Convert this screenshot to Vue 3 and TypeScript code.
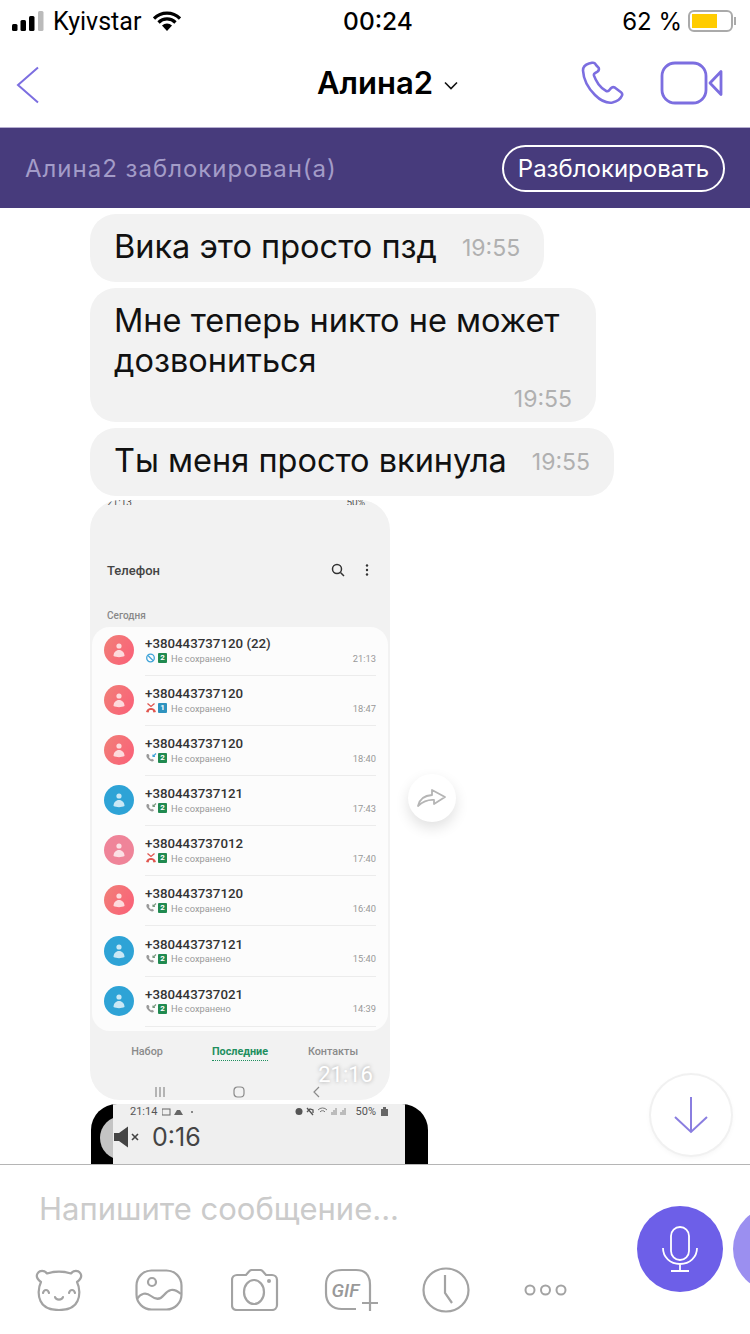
<script setup lang="ts">
type CallKind = 'blocked' | 'missed' | 'spam' | 'incoming'

interface CallRow {
  number: string
  kind: CallKind
  sim: number
  time: string
  tone: 'coral' | 'blue' | 'pink'
}

const calls: CallRow[] = [
  { number: '+380443737120 (22)', kind: 'blocked', sim: 2, time: '21:13', tone: 'coral' },
  { number: '+380443737120', kind: 'missed', sim: 1, time: '18:47', tone: 'coral' },
  { number: '+380443737120', kind: 'spam', sim: 2, time: '18:40', tone: 'coral' },
  { number: '+380443737121', kind: 'incoming', sim: 2, time: '17:43', tone: 'blue' },
  { number: '+380443737012', kind: 'missed', sim: 2, time: '17:40', tone: 'pink' },
  { number: '+380443737120', kind: 'incoming', sim: 2, time: '16:40', tone: 'coral' },
  { number: '+380443737121', kind: 'incoming', sim: 2, time: '15:40', tone: 'blue' },
  { number: '+380443737021', kind: 'incoming', sim: 2, time: '14:39', tone: 'blue' },
]
</script>

<template>
  <div class="page">
    <div class="status-bar">
      <div class="status-left">
        <svg class="signal" width="32" height="20" viewBox="0 0 32 20">
          <rect x="0" y="13" width="5.500" height="7" rx="1.500" fill="#000" />
          <rect x="8.500" y="9" width="5.500" height="11" rx="1.500" fill="#000" />
          <rect x="17" y="5" width="5.500" height="15" rx="1.500" fill="#000" />
          <rect x="26" y="0" width="5.500" height="20" rx="1.500" fill="#bbb" />
        </svg>
        <span class="carrier">Kyivstar</span>
        <svg class="wifi" width="28" height="20" viewBox="0 0 28 20">
          <path d="M1 7.500a18.500 18.500 0 0 1 26 0" fill="none" stroke="#000" stroke-width="3.200" />
          <path d="M5.500 11.500a12 12 0 0 1 17 0" fill="none" stroke="#000" stroke-width="3.200" />
          <path d="M14 20l-5-5.500a7.200 7.200 0 0 1 10 0z" fill="#000" />
        </svg>
      </div>
      <span class="clock">00:24</span>
      <div class="status-right">
        <span>62 %</span>
        <div class="battery"><div class="battery-fill"></div></div>
        <div class="battery-tip"></div>
      </div>
    </div>

    <div class="nav-bar">
      <svg class="back" width="24" height="38" viewBox="0 0 24 38">
        <path d="M22 1.500L2 19l20 17.500" fill="none" stroke="#7c6ee0" stroke-width="2" />
      </svg>
      <div class="title">
        <span>Алина2</span>
        <svg width="14" height="9" viewBox="0 0 14 9">
          <path d="M1 1.500l6 6 6-6" fill="none" stroke="#111" stroke-width="1.600" />
        </svg>
      </div>
      <svg class="phone" width="44" height="44" viewBox="0 0 44 44">
        <path
          d="M8 2.500c-3.500 1-6 3.500-6 7 .5 9 5.500 18 12 24.500 5 5 11.500 8.500 17.500 7.500 3.500-.8 8-3.500 9.500-7 .6-1.500 0-2.500-1-3.300l-6-4.500c-1.500-1-3-.7-4 .4l-2 2.400c-1 .9-2 1-3 .4-3-1.700-5.500-4-7.500-6.700-2-2.800-3.500-5.500-4.500-8.500-.3-1 0-2 1-2.600l2.500-1.500c1.300-.9 1.700-2.300 1.200-3.800L15 4c-.7-1.700-2.300-2.500-4-2.200z"
          fill="none"
          stroke="#7c6ee0"
          stroke-width="2.600"
          stroke-linejoin="round"
        />
      </svg>
      <svg class="video" width="64" height="44" viewBox="0 0 64 44">
        <rect x="2" y="2" width="44" height="40" rx="13" fill="none" stroke="#7c6ee0" stroke-width="2.800" />
        <path d="M61 10.500v23L50 22z" fill="none" stroke="#7c6ee0" stroke-width="2.800" stroke-linejoin="round" />
      </svg>
    </div>

    <div class="banner">
      <span class="banner-text">Алина2 заблокирован(а)</span>
      <div class="unblock">Разблокировать</div>
    </div>

    <div class="chat">
      <div class="bubble">
        <span>Вика это просто пзд</span>
        <span class="time">19:55</span>
      </div>
      <div class="bubble bubble-wide">
        <span class="wrap-text">Мне теперь никто не может дозвониться</span>
        <span class="time time-below">19:55</span>
      </div>
      <div class="bubble">
        <span>Ты меня просто вкинула</span>
        <span class="time">19:55</span>
      </div>

      <div class="image-row">
        <div class="shot">
          <div class="shot-status">
            <span>21:13</span>
            <span class="shot-status-fill"></span>
            <span>50%</span>
          </div>
          <div class="shot-head">
            <span class="shot-title">Телефон</span>
            <svg width="14" height="14" viewBox="0 0 14 14">
              <circle cx="6" cy="6" r="4.500" fill="none" stroke="#333" stroke-width="1.500" />
              <path d="M9.500 9.500L13 13" stroke="#333" stroke-width="1.500" />
            </svg>
            <svg width="4" height="14" viewBox="0 0 4 14">
              <circle cx="2" cy="2.500" r="1.200" fill="#333" />
              <circle cx="2" cy="7" r="1.200" fill="#333" />
              <circle cx="2" cy="11.500" r="1.200" fill="#333" />
            </svg>
          </div>
          <div class="shot-day">Сегодня</div>
          <div class="call-list">
            <div v-for="(c, i) in calls" :key="i" class="call-row">
              <div class="avatar" :class="c.tone">
                <svg width="14" height="16" viewBox="0 0 14 16">
                  <circle cx="7" cy="4" r="2.600" fill="#fff" fill-opacity="0.75" />
                  <path d="M1.500 14c0-3.500 2.500-6 5.500-6s5.500 2.500 5.500 6c-3 1.500-8 1.500-11 0z" fill="#fff" fill-opacity="0.75" />
                </svg>
              </div>
              <div class="call-body">
                <div class="call-number">{{ c.number }}</div>
                <div class="call-sub">
                  <svg class="call-icon" width="12" height="10" viewBox="0 0 12 10">
                    <template v-if="c.kind === 'blocked'">
                      <circle cx="5.500" cy="5" r="3.800" fill="none" stroke="#3fa3d8" stroke-width="1.300" />
                      <path d="M3 2.500l5 5" stroke="#3fa3d8" stroke-width="1.300" />
                    </template>
                    <template v-else-if="c.kind === 'missed'">
                      <path d="M1 9c1-3 2.500-4 5-4s4 1 5 4l-2.500.5L7.500 7h-3L3.500 9.500z" fill="#e0564f" />
                      <path d="M2.500 .5L6 3.500 9.500 .5" fill="none" stroke="#e0564f" stroke-width="1.300" />
                    </template>
                    <template v-else>
                      <path d="M2 1c-1 1-1 3 1 5s4 3 5.500 2l.5-1-2-1.200-1 .7L3.800 4l.8-1L3.400 1z" fill="#9a9a9a" />
                      <path d="M11 .5L8 3.500M8 1.500v2h2" fill="none" :stroke="c.kind === 'spam' ? '#3fa3d8' : '#7a9a80'" stroke-width="1.100" />
                    </template>
                  </svg>
                  <span class="sim" :class="{ 'sim-one': c.sim === 1 }">{{ c.sim }}</span>
                  <span class="call-note">Не сохранено</span>
                  <span class="call-time">{{ c.time }}</span>
                </div>
              </div>
            </div>
          </div>
          <div class="shot-tabs">
            <span>Набор</span>
            <span class="tab-active">Последние</span>
            <span>Контакты</span>
          </div>
          <div class="shot-keys">
            <svg width="12" height="12" viewBox="0 0 12 12">
              <path d="M2 1v10M6 1v10M10 1v10" stroke="#8a8a8a" stroke-width="1.200" />
            </svg>
            <svg width="12" height="12" viewBox="0 0 12 12">
              <rect x="1" y="1" width="10" height="10" rx="3.500" fill="none" stroke="#8a8a8a" stroke-width="1.200" />
            </svg>
            <svg width="12" height="12" viewBox="0 0 12 12">
              <path d="M8 1L3 6l5 5" fill="none" stroke="#8a8a8a" stroke-width="1.200" />
            </svg>
          </div>
          <span class="shot-stamp">21:16</span>
        </div>
        <div class="share">
          <svg width="30" height="22" viewBox="0 0 30 22">
            <path
              d="M1 20c1.500-7 6-10.500 14-11V4l13 7-11 7v-4c-6-.5-11 1.500-16 6z"
              fill="none"
              stroke="#b5b5b5"
              stroke-width="1.800"
              stroke-linejoin="round"
              transform="translate(0 -1)"
            />
          </svg>
        </div>
      </div>

      <div class="video-msg">
        <div class="video-gray"></div>
        <div class="video-inner">
          <div class="video-status">
            <span>21:14</span>
            <svg width="34" height="8" viewBox="0 0 34 8">
              <rect x="0" y="1" width="8" height="6" fill="none" stroke="#666" stroke-width="1" />
              <path d="M12 7l3-5h3l3 5z" fill="#666" />
              <circle cx="30" cy="4" r="1" fill="#666" />
            </svg>
            <span class="video-status-fill"></span>
            <svg width="56" height="9" viewBox="0 0 56 9">
              <circle cx="4" cy="4.500" r="3.500" fill="#555" />
              <path d="M12 1l6 7M12 5l3-3 3 1v3" stroke="#555" stroke-width="1.300" fill="none" />
              <path d="M23 3a6 6 0 0 1 9 0M25 5a3 3 0 0 1 5 0" stroke="#777" fill="none" />
              <path d="M37 8V5M39 8V3M41 8V1M46 8V5M48 8V3M50 8V1" stroke="#888" />
            </svg>
            <span>50%</span>
            <svg width="7" height="9" viewBox="0 0 7 9"><rect y="2" width="7" height="7" fill="#666" /><rect x="2" width="3" height="2" fill="#666" /></svg>
          </div>
          <div class="video-length">
            <svg width="28" height="22" viewBox="0 0 28 22">
              <path d="M0 7h5l9-6.500v21L5 15H0z" fill="#444" />
              <path d="M18 8l6 6M24 8l-6 6" stroke="#444" stroke-width="1.600" />
            </svg>
            <span>0:16</span>
          </div>
        </div>
      </div>

      <div class="scroll-down">
        <svg width="36" height="38" viewBox="0 0 36 38">
          <path d="M18 1v35M2 21l16 15 16-15" fill="none" stroke="#8a7ee0" stroke-width="2" />
        </svg>
      </div>
    </div>

    <div class="composer">
      <div class="composer-left">
        <div class="placeholder">Напишите сообщение...</div>
        <div class="tools">
          <svg width="48" height="42" viewBox="0 0 48 42">
            <path
              d="M6 13C2 10 1 7 2.500 4.500 4.500 1 9.500 1 12 4.500c7-2.500 17-2.500 24 0C38.500 1 43.500 1 45.500 4.500 47 7 46 10 42 13c3 6 3 14 .5 19-2.500 6-9 9-18.500 9S8 38 5.500 32C3 27 3 19 6 13z"
              fill="none"
              stroke="#a3a3a3"
              stroke-width="2.200"
              stroke-linejoin="round"
            />
            <path d="M8 24c1-4 5-4 6 0M34 24c1-4 5-4 6 0M20 28c1 3.500 7 3.500 8 0" fill="none" stroke="#a3a3a3" stroke-width="2.200" stroke-linecap="round" />
          </svg>
          <svg width="48" height="42" viewBox="0 0 48 42">
            <rect x="1.500" y="1.500" width="45" height="39" rx="15" fill="none" stroke="#a3a3a3" stroke-width="2.200" />
            <circle cx="17" cy="13" r="4" fill="none" stroke="#a3a3a3" stroke-width="2.200" />
            <path d="M2 30c4-6 9-7 14-3s9 4 13-1 9-8 17-1" fill="none" stroke="#a3a3a3" stroke-width="2.200" />
          </svg>
          <svg width="48" height="42" viewBox="0 0 48 42">
            <path
              d="M6 6h9l3-3.500c1-1 2-1.500 3-1.500h8c1 0 2 .5 3 1.500l3 3.500h6c2.500 0 5 2 5 5v25c0 3-2.500 5-5 5H6c-3 0-5-2-5-5V11c0-3 2.500-5 5-5z"
              fill="none"
              stroke="#a3a3a3"
              stroke-width="2.200"
            />
            <ellipse cx="23" cy="23" rx="10" ry="12" fill="none" stroke="#a3a3a3" stroke-width="2.200" />
            <circle cx="38" cy="12" r="2" fill="#a3a3a3" />
          </svg>
          <div class="gif">
            <svg width="54" height="44" viewBox="0 0 54 44">
              <path d="M32 41H18C8 41 2 35 2 25V17C2 7 8 2 18 2h14c9 0 14 5 14 15v10" fill="none" stroke="#a3a3a3" stroke-width="2.200" />
              <path d="M46 27v16M38 35h16" stroke="#a3a3a3" stroke-width="2.200" />
            </svg>
            <span class="gif-label">GIF</span>
          </div>
          <svg width="48" height="46" viewBox="0 0 48 46">
            <ellipse cx="24" cy="23" rx="22.500" ry="21.500" fill="none" stroke="#a3a3a3" stroke-width="2.200" />
            <path d="M23 8v18l7 10" fill="none" stroke="#a3a3a3" stroke-width="2.200" />
          </svg>
          <svg width="44" height="14" viewBox="0 0 44 14">
            <circle cx="6" cy="7" r="4.500" fill="none" stroke="#a3a3a3" stroke-width="2" />
            <circle cx="21.500" cy="7" r="4.500" fill="none" stroke="#a3a3a3" stroke-width="2" />
            <circle cx="37" cy="7" r="4.500" fill="none" stroke="#a3a3a3" stroke-width="2" />
          </svg>
        </div>
      </div>
      <div class="mic">
        <svg width="36" height="46" viewBox="0 0 36 46">
          <rect x="9" y="1" width="18" height="33" rx="9" fill="none" stroke="#fff" stroke-width="1.800" />
          <path d="M1 22c0 9 7 16 17 16s17-7 17-16M18 38v7M9 45h18" fill="none" stroke="#fff" stroke-width="1.800" />
        </svg>
      </div>
      <div class="mic-next"></div>
    </div>
  </div>
</template>

<style>
html,
body {
  margin: 0;
  background: #fff;
}
</style>

<style scoped>
.page {
  width: 750px;
  height: 1334px;
  display: flex;
  flex-direction: column;
  overflow: hidden;
  background: #fff;
  font-family: Inter, 'Liberation Sans', sans-serif;
  color: #000;
}

.status-bar {
  height: 42px;
  flex-shrink: 0;
  padding: 0 14px 0 12px;
  display: grid;
  grid-template-columns: 1fr auto 1fr;
  align-items: center;
  font-size: 24px;
}

.status-left {
  display: flex;
  align-items: center;
}

.carrier {
  margin-left: 9px;
  font-family: Roboto, sans-serif;
  font-size: 25px;
}

.wifi {
  margin-left: 12px;
}

.clock {
  font-weight: 500;
  font-size: 24.500px;
  margin-left: 8px;
}

.status-right {
  display: flex;
  align-items: center;
  justify-content: flex-end;
}

.battery {
  width: 45px;
  height: 22px;
  margin-left: 6px;
  border: 2px solid #aaa;
  border-radius: 6px;
  padding: 2px;
  box-sizing: border-box;
}

.battery-fill {
  width: 25px;
  height: 100%;
  background: #fc0;
}

.battery-tip {
  width: 2px;
  height: 8px;
  margin-left: 1px;
  background: #aaa;
}

.nav-bar {
  height: 86px;
  flex-shrink: 0;
  display: flex;
  align-items: center;
  padding: 0 26px 0 16px;
  border-bottom: 1px solid #b5aed0;
  box-sizing: border-box;
}

.title {
  flex: 1;
  display: flex;
  align-items: center;
  gap: 11px;
  padding-left: 277px;
  margin-top: -4px;
  font-size: 31px;
  font-weight: 600;
  box-sizing: border-box;
}

.title svg {
  margin-top: 6px;
}

.phone {
  margin: -3px 35px 0 0;
}

.video {
  margin-top: -3px;
}

.banner {
  height: 80px;
  flex-shrink: 0;
  display: flex;
  align-items: center;
  justify-content: space-between;
  padding: 0 25px;
  background: #473b7c;
  font-size: 24px;
}

.banner-text {
  color: #a39cc8;
  letter-spacing: 1px;
}

.unblock {
  height: 47px;
  width: 223px;
  box-sizing: border-box;
  display: flex;
  align-items: center;
  justify-content: center;
  border: 2px solid #fff;
  border-radius: 24px;
  color: #fff;
}

.chat {
  position: relative;
  flex: 1;
  min-height: 0;
  overflow: hidden;
  padding: 6px 0 0 90px;
  display: flex;
  flex-direction: column;
  align-items: flex-start;
  gap: 6px;
}

.bubble {
  flex-shrink: 0;
  height: 68px;
  padding: 0 24px 3px;
  box-sizing: border-box;
  display: flex;
  align-items: center;
  gap: 25px;
  background: #f2f2f2;
  border-radius: 26px;
  font-size: 32.500px;
  color: #111;
}

.bubble-wide {
  width: 506px;
  height: 134px;
  display: block;
  padding-top: 13px;
  line-height: 40px;
}

.wrap-text {
  display: block;
}

.time {
  font-size: 23px;
  margin-top: 3px;
  color: #b0b0b0;
}

.time-below {
  display: block;
  text-align: right;
  line-height: 30px;
  margin-top: 3px;
}

.image-row {
  flex-shrink: 0;
  display: flex;
  align-items: center;
  margin-top: -2px;
}

.shot {
  position: relative;
  width: 300px;
  height: 600px;
  background: #f2f2f2;
  border-radius: 30px;
  overflow: hidden;
  font-family: Roboto, sans-serif;
}

.shot-status {
  height: 5px;
  padding: 0 25px 0 17px;
  display: flex;
  gap: 6px;
  overflow: hidden;
  font-size: 10px;
  line-height: 5px;
  color: #555;
}

.shot-status-fill {
  flex: 1;
}

.shot-head {
  display: flex;
  align-items: center;
  gap: 20px;
  height: 24px;
  margin-top: 53px;
  padding: 0 21px 0 17px;
}

.shot-title {
  flex: 1;
  font-size: 13px;
  font-weight: 500;
  color: #444;
}

.shot-day {
  margin-top: 28px;
  padding-left: 17px;
  font-size: 10px;
  font-weight: 500;
  line-height: 12px;
  color: #888;
}

.call-list {
  margin: 5px 2px 0;
  height: 404px;
  padding-top: 1px;
  box-sizing: border-box;
  background: #fcfcfc;
  border-radius: 18px;
}

.call-row {
  height: 50.100px;
  display: flex;
  padding: 0 12px;
  box-sizing: border-box;
}

.avatar {
  width: 30px;
  height: 30px;
  margin-top: 7px;
  border-radius: 50%;
  display: flex;
  align-items: center;
  justify-content: center;
  flex-shrink: 0;
}

.coral {
  background: linear-gradient(120deg, #f08078, #fb5f78);
}

.blue {
  background: #2ea3d6;
}

.pink {
  background: #ef8499;
}

.call-body {
  flex: 1;
  margin-left: 11px;
  border-bottom: 1px solid #ececec;
  height: 48px;
  box-sizing: border-box;
}

.call-number {
  margin-top: 7px;
  font-size: 13.300px;
  font-weight: 500;
  line-height: 17px;
  color: #333;
}

.call-sub {
  display: flex;
  align-items: center;
  height: 12px;
  font-size: 9.300px;
  color: #999;
}

.call-icon {
  flex-shrink: 0;
}

.sim {
  width: 9px;
  height: 10px;
  margin-left: 1px;
  background: #208a50;
  border-radius: 1px;
  color: #fff;
  font-size: 8px;
  font-weight: 700;
  line-height: 10px;
  text-align: center;
}

.sim-one {
  background: #2f93bf;
}

.call-note {
  flex: 1;
  margin-left: 4px;
}

.shot-tabs {
  height: 21px;
  margin-top: 13px;
  display: grid;
  grid-template-columns: 114px 72px 1fr;
  justify-items: center;
  font-size: 10.800px;
  font-weight: 500;
  line-height: 15px;
  color: #8a8a8a;
}

.tab-active {
  color: #1f8f5f;
  font-weight: 700;
  border-bottom: 1px dotted #1f8f5f;
  height: 16px;
  white-space: nowrap;
}

.shot-keys {
  display: flex;
  justify-content: space-between;
  padding: 0 67px 0 64px;
  margin-top: 21px;
}

.shot-stamp {
  position: absolute;
  right: 17px;
  bottom: 13px;
  font-size: 22px;
  color: #fff;
  text-shadow: 0 0 4px rgba(0, 0, 0, 0.35);
}

.share {
  width: 48px;
  height: 48px;
  margin-left: 18px;
  margin-top: -4px;
  border-radius: 50%;
  background: #fff;
  box-shadow: 0 6px 14px rgba(0, 0, 0, 0.12);
  display: flex;
  align-items: center;
  justify-content: center;
}

.video-msg {
  flex-shrink: 0;
  position: relative;
  width: 337px;
  height: 120px;
  margin: -2px 0 0 1px;
  background: #000;
  border-radius: 26px;
  overflow: hidden;
  padding-left: 22px;
  box-sizing: border-box;
}

.video-gray {
  position: absolute;
  left: 9px;
  top: 12px;
  width: 44px;
  height: 44px;
  border-radius: 50%;
  background: #c4c4c4;
}

.video-inner {
  position: relative;
  width: 292px;
  height: 100%;
  background: #efefef;
  box-sizing: border-box;
  padding: 0 0 0 1px;
}

.video-status {
  display: flex;
  align-items: center;
  gap: 5px;
  padding: 0 17px 0 16px;
  font-family: Roboto, sans-serif;
  font-size: 11px;
  line-height: 15px;
  color: #555;
}

.video-status-fill {
  flex: 1;
}

.video-length {
  display: flex;
  align-items: center;
  gap: 10px;
  margin-top: 5px;
  font-size: 25px;
  line-height: 26px;
  color: #444;
}

.scroll-down {
  position: absolute;
  left: 651px;
  top: 867px;
  width: 80px;
  height: 80px;
  border-radius: 50%;
  background: #fff;
  box-shadow: 0 0 0 2px #f1f1f1, 0 2px 6px rgba(0, 0, 0, 0.06);
  display: flex;
  align-items: center;
  justify-content: center;
}

.composer {
  height: 170px;
  flex-shrink: 0;
  box-sizing: border-box;
  border-top: 1px solid #b5b5b5;
  background: #fff;
  display: flex;
  align-items: flex-start;
  position: relative;
  z-index: 1;
}

.composer-left {
  width: 637px;
  flex-shrink: 0;
}

.placeholder {
  margin: 27px 0 0 39px;
  font-size: 31px;
  line-height: 34px;
  color: #cbcbcb;
}

.tools {
  display: grid;
  grid-template-columns: 98px 101px 92px 99px 92px 107px;
  align-items: center;
  justify-items: center;
  margin: 41px 0 0 10px;
}

.gif {
  position: relative;
  display: flex;
}

.gif-label {
  position: absolute;
  left: 8px;
  top: 11px;
  font-family: Roboto, sans-serif;
  font-size: 19px;
  font-style: italic;
  font-weight: 500;
  color: #999;
}

.mic {
  width: 86px;
  height: 86px;
  margin-top: 41px;
  border-radius: 50%;
  background: #6d5fe8;
  display: flex;
  align-items: center;
  justify-content: center;
  flex-shrink: 0;
}

.mic-next {
  width: 86px;
  height: 86px;
  margin: 41px 0 0 10px;
  border-radius: 50%;
  background: #9b8ff0;
  flex-shrink: 0;
}
</style>
